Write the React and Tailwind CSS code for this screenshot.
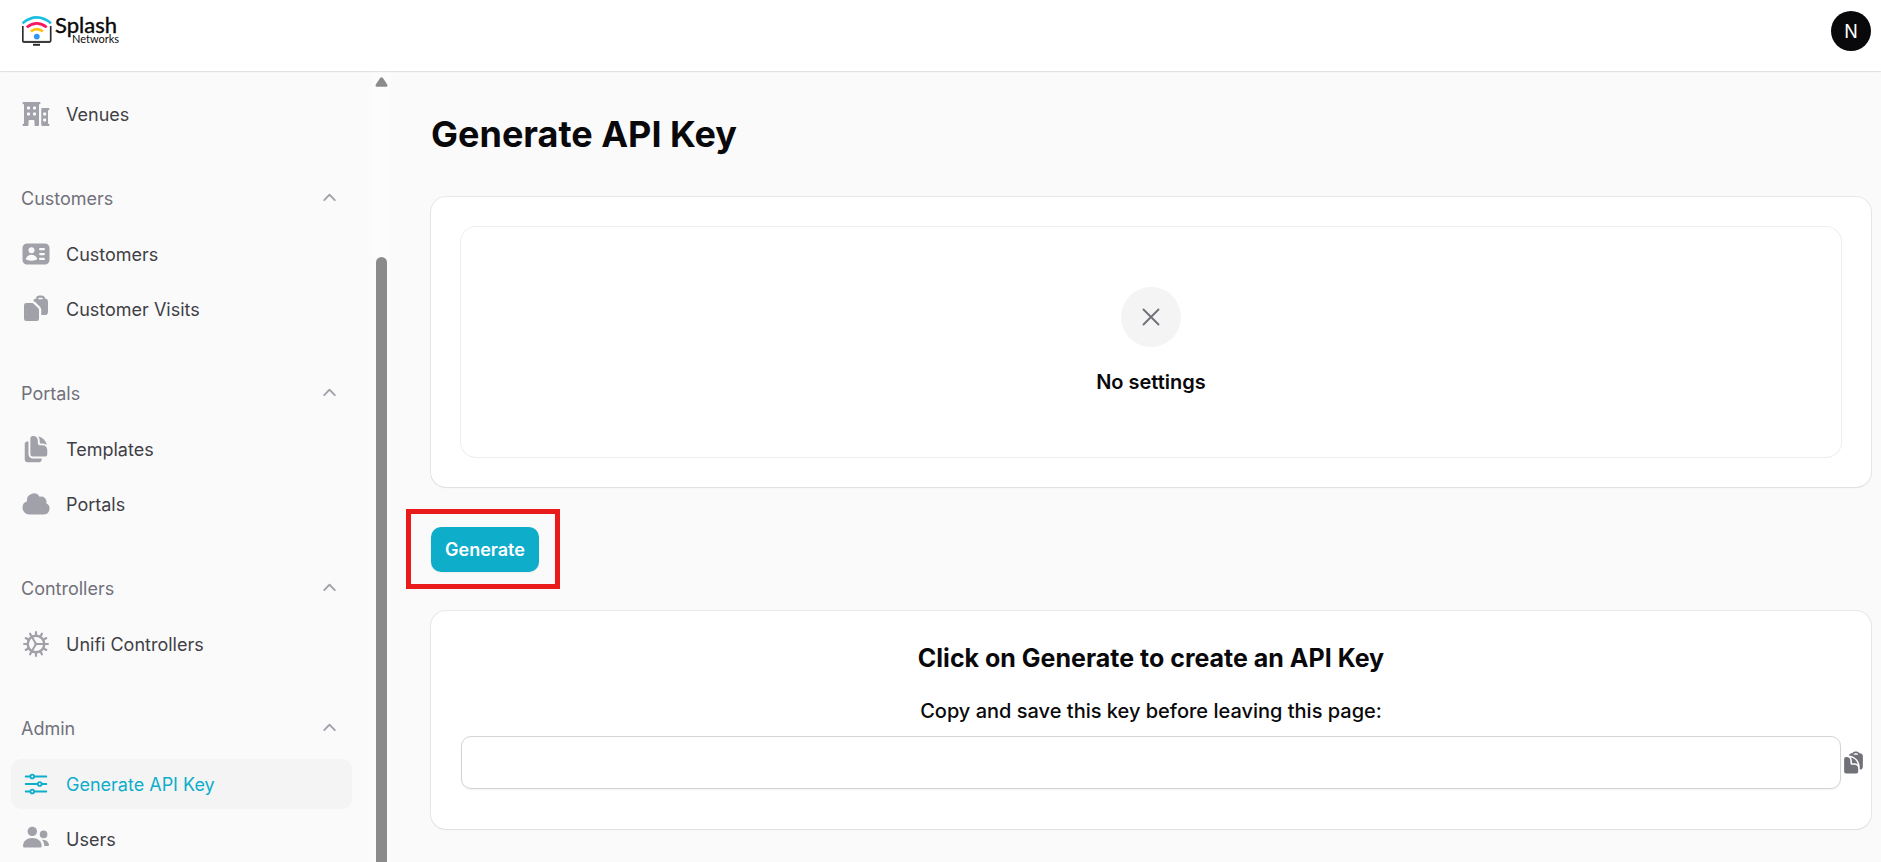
import {
  HiMiniBuildingOffice2,
  HiMiniIdentification,
  HiMiniClipboardDocument,
  HiClipboardDocument,
  HiDocumentDuplicate,
  HiMiniCloud,
  HiOutlineAdjustmentsHorizontal,
  HiMiniChevronUp,
  HiOutlineXMark,
} from 'react-icons/hi2';

function CogIcon({ className }) {
  const teeth = [0, 30, 60, 90, 120, 150, 180, 210, 240, 270, 300, 330];
  return (
    <svg viewBox="0 0 30 30" className={className} fill="none" stroke="currentColor" strokeLinecap="round" aria-hidden="true">
      <circle cx="15" cy="15" r="8.300" strokeWidth="2.500" />
      {teeth.map((angle) => (
        <path key={angle} d="M23.500 15H26.900" strokeWidth="2.200" transform={`rotate(${angle} 15 15)`} />
      ))}
      {[0, 120, 240].map((angle) => (
        <path key={angle} d="M14.500 15H23" strokeWidth="2" transform={`rotate(${angle} 15 15)`} />
      ))}
    </svg>
  );
}

function UsersIcon({ className }) {
  return (
    <svg viewBox="0 0 30 30" className={className} fill="currentColor" aria-hidden="true">
      <circle cx="11.300" cy="7.400" r="4.700" />
      <path d="M2 22C2 17 6 14 11.300 14S20.700 17 20.700 22Q20.700 23.500 19.300 23.500H3.400Q2 23.500 2 22Z" />
      <circle cx="22.600" cy="10.400" r="3.800" />
      <path d="M20.900 15.800C25.400 15.500 28 18.500 28 21Q28 22 27 22H23.300C23.200 19.500 22.500 17.500 20.900 15.800Z" />
    </svg>
  );
}

const groups = [
  { items: [{ label: 'Venues', icon: HiMiniBuildingOffice2 }] },
  {
    title: 'Customers',
    items: [
      { label: 'Customers', icon: HiMiniIdentification },
      { label: 'Customer Visits', icon: HiMiniClipboardDocument },
    ],
  },
  {
    title: 'Portals',
    items: [
      { label: 'Templates', icon: HiDocumentDuplicate },
      { label: 'Portals', icon: HiMiniCloud },
    ],
  },
  { title: 'Controllers', items: [{ label: 'Unifi Controllers', icon: CogIcon }] },
  {
    title: 'Admin',
    items: [
      { label: 'Generate API Key', icon: HiOutlineAdjustmentsHorizontal, active: true },
      { label: 'Users', icon: UsersIcon },
    ],
  },
];

function Logo() {
  return (
    <a href="#home" aria-label="Splash Networks" className="block">
      <svg width="104" height="40" viewBox="0 0 104 40" fill="none">
        <path d="M0.800 15V29.800Q0.800 31 2 31H27.500Q28.700 31 28.700 29.800V15" stroke="#2d2d2f" strokeWidth="1.700" />
        <path d="M1.500 30.900H28" stroke="#3a3a3c" strokeWidth="2" />
        <path d="M11 33.800H18" stroke="#2d2d2f" strokeWidth="2" />
        <path d="M0.500 12.300Q14.800 0.600 29 12.300" stroke="#19bfe0" strokeWidth="2.600" />
        <path d="M4.800 16.200Q14.800 8.400 24.700 16.200" stroke="#f5195f" strokeWidth="2.600" />
        <path d="M8.800 20.400Q14.800 15.800 20.900 20.400" stroke="#ffc20e" strokeWidth="2.600" />
        <circle cx="14.800" cy="25.600" r="2.900" fill="#2f97f3" />
        <text x="33" y="22" fontSize="22" fontFamily="Lato, sans-serif" fill="#0a0a0a" stroke="#0a0a0a" strokeWidth="0.400">
          Splash
        </text>
        <text x="50" y="32" fontSize="11" fontFamily="Lato, sans-serif" fill="#0a0a0a">
          Networks
        </text>
      </svg>
    </a>
  );
}

function NavItem({ label, icon: Icon, active }) {
  return (
    <li>
      <a
        href={'#' + label.toLowerCase().replaceAll(' ', '-')}
        aria-current={active ? 'page' : undefined}
        className={
          'flex h-[50px] items-center gap-[15px] rounded-[10px] px-2.5 text-[18px] ' +
          (active ? 'bg-[#f4f4f5] text-[#0eadca]' : 'text-[#3f3f46]')
        }
      >
        <Icon className={'size-[30px] shrink-0 ' + (active ? 'text-[#0eadca]' : 'text-[#a1a1aa]')} />
        {label}
      </a>
    </li>
  );
}

function Sidebar() {
  return (
    <aside className="flex w-[391px] shrink-0">
      <nav className="flex min-w-0 flex-1 flex-col gap-[34px] overflow-hidden pt-[18px] pr-5 pl-[11px]">
        {groups.map((group) => (
          <div key={group.items[0].label} className="flex shrink-0 flex-col gap-1.5">
            {group.title && (
              <button
                type="button"
                className="flex h-[50px] items-center justify-between px-2.5 text-[18px] text-[#71717a]"
              >
                {group.title}
                <HiMiniChevronUp className="size-[25px] text-[#a1a1aa]" />
              </button>
            )}
            <ul className="flex flex-col gap-[5px]">
              {group.items.map((item) => (
                <NavItem key={item.label} {...item} />
              ))}
            </ul>
          </div>
        ))}
      </nav>
      <div aria-hidden="true" className="flex w-[19px] flex-col items-center bg-[#fcfcfc] pt-1.5">
        <svg width="13" height="10" viewBox="0 0 13 10" fill="#8b8b8b">
          <path d="M5.300 0.800Q6.500 -0.500 7.700 0.800L12.200 7.600Q13 9.600 11.200 9.800H1.800Q0 9.600 0.800 7.600Z" />
        </svg>
        <div className="mt-[170px] w-[11px] flex-1 rounded-t-full bg-[#8b8b8b]" />
      </div>
    </aside>
  );
}

function Card({ children }) {
  return (
    <section className="rounded-[15px] bg-white p-[30px] shadow-xs ring-1 ring-[#09090b]/7">
      {children}
    </section>
  );
}

export default function App() {
  return (
    <div className="flex h-screen flex-col bg-[#fafafa] font-[Inter,sans-serif] text-[#09090b]">
      <header className="z-10 flex h-[71px] shrink-0 items-start justify-between bg-white pt-[11px] pr-2.5 pl-[22px] shadow-xs ring-1 ring-[#09090b]/7">
        <Logo />
        <button
          type="button"
          aria-label="User menu"
          className="flex size-10 items-center justify-center rounded-full bg-[#09090b] text-[18px] text-white"
        >
          N
        </button>
      </header>

      <div className="flex min-h-0 flex-1">
        <Sidebar />
        <main className="min-w-0 flex-1 pt-[41px] pr-2.5 pl-10">
          <h1 className="text-[36px] leading-[45px] font-bold">Generate API Key</h1>

          <div className="mt-10">
            <Card>
              <div className="flex flex-col items-center gap-5 rounded-[15px] py-[60px] ring-1 ring-[#09090b]/7">
                <div className="flex size-[60px] items-center justify-center rounded-full bg-[#f4f4f5]">
                  <HiOutlineXMark className="size-[30px] text-[#71717a]" />
                </div>
                <h2 className="text-[20px] leading-[30px] font-semibold">No settings</h2>
              </div>
            </Card>
          </div>

          <div className="mt-[22px] -ml-[25px] flex w-fit border-[5px] border-[#e81a1a] pt-[13px] pr-4 pb-3 pl-5">
            <button
              type="button"
              className="h-[45px] rounded-[10px] bg-[#0eadca] px-3.5 text-[18px] font-semibold text-white shadow-xs"
            >
              Generate
            </button>
          </div>

          <div className="mt-[22px]">
            <Card>
              <h2 className="text-center text-[25px] leading-[35px] font-bold">Click on Generate to create an API Key</h2>
              <label htmlFor="api-key" className="mt-5 block text-center text-[20px] leading-[30px] font-medium">
                Copy and save this key before leaving this page:
              </label>
              <div className="mt-2.5 -mr-[25px] mb-2.5 flex items-center">
                <input
                  id="api-key"
                  type="text"
                  readOnly
                  className="h-[53px] min-w-0 flex-1 rounded-[10px] border border-[#d4d4d8] bg-white px-4 text-[20px] shadow-xs"
                />
                <button type="button" aria-label="Copy key" className="text-[#71717a]">
                  <HiClipboardDocument className="size-[25px]" />
                </button>
              </div>
            </Card>
          </div>
        </main>
      </div>
    </div>
  );
}
